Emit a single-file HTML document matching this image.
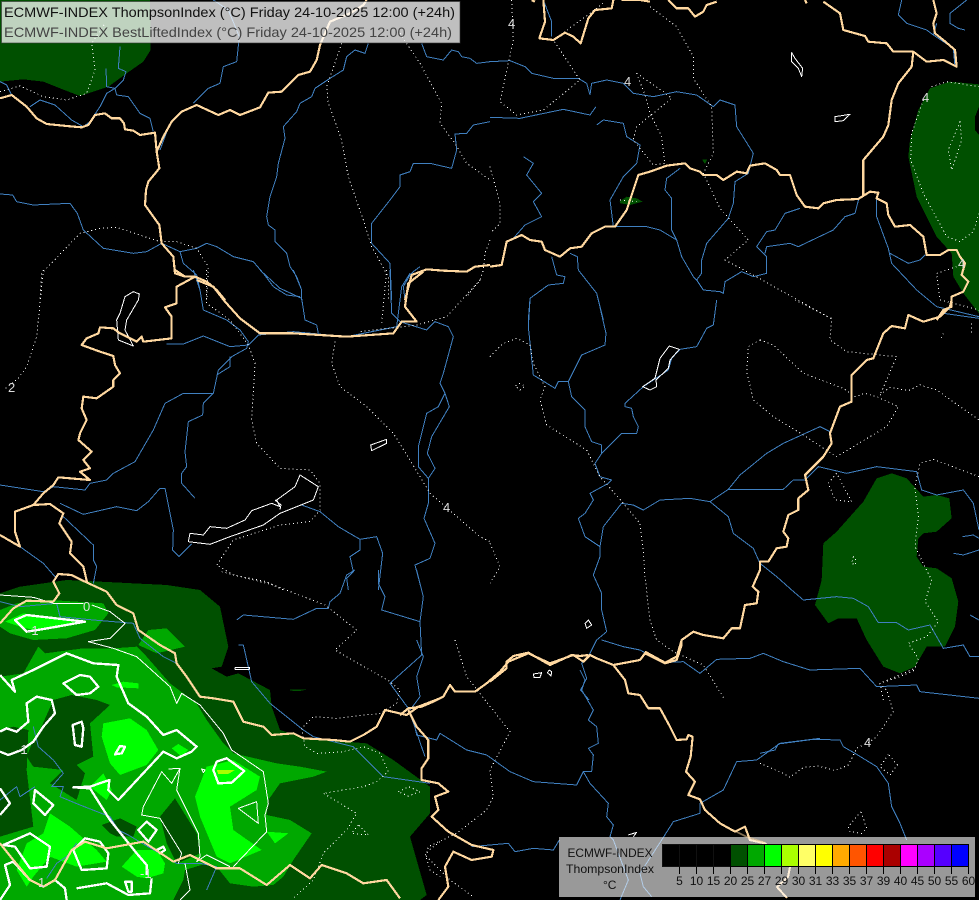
<!DOCTYPE html>
<html lang="en"><head><meta charset="utf-8"><title>ECMWF-INDEX ThompsonIndex</title>
<style>
html,body{margin:0;padding:0;background:#000;width:979px;height:900px;overflow:hidden}
svg{display:block;position:absolute;left:0;top:0}
polyline,polygon{stroke-linejoin:round}
.r *{fill:none;stroke:#4080c0;stroke-width:3}
.d *{fill:none;stroke:#fff;stroke-width:3;stroke-dasharray:3 9}
.w *{fill:none;stroke:#fff;stroke-width:3}
.t *{fill:none;stroke:#fff;stroke-width:7}
.b *{fill:none;stroke:#ffd8a0;stroke-width:6.5}
.k{fill:#005000}.m{fill:#00a800}.g{fill:#00ff00}.y{fill:#aaff00}
text{font-family:"Liberation Sans",sans-serif}
.lab{font-size:13px;fill:#ddd}
.tk{font-size:12px;fill:#111;text-anchor:middle}
</style></head><body>
<svg width="979" height="900" viewBox="0 0 979 900" xmlns="http://www.w3.org/2000/svg" shape-rendering="crispEdges">
<rect width="979" height="900" fill="#000"/>

<!-- FILLS -->
<g transform="scale(.33333)"><polygon class="k" points="0,0 450,0 452,150 430,185 380,220 325,260 240,288 180,265 130,245 70,238 0,245"/></g>
<g transform="translate(490 0) scale(.33333)">
<polygon class="k" points="1467,253 1380,245 1320,265 1285,330 1260,420 1255,470 1280,590 1340,710 1385,760 1390,830 1420,880 1467,940 1467,405 1455,390 1455,350 1467,320"/>
<polygon class="k" points="388,605 410,590 440,595 458,605 420,615 392,610"/>
<polygon class="k" points="636,478 652,478 645,492"/>
</g>
<g transform="translate(490 300) scale(.33333)">
<polygon class="k" points="1205,520 1160,535 1120,605 1040,695 1000,730 995,840 975,915 1015,970 1045,955 1100,955 1130,1020 1180,1100 1230,1120 1275,1100 1310,1040 1365,1040 1395,980 1405,905 1385,835 1340,805 1300,800 1280,770 1285,715 1300,700 1340,695 1385,655 1378,595 1340,585 1300,590 1250,535"/>
</g>
<g transform="translate(0 570) scale(.33333)">
<polygon class="k" points="0,70 60,50 200,30 500,45 600,60 660,110 685,230 665,290 635,295 680,320 715,310 810,360 815,410 840,480 915,505 1100,520 1180,570 1290,650 1290,730 1230,800 1280,975 1260,990 0,990"/>
<polygon class="k" points="870,358 925,358 900,363 870,362" style="fill:#005000"/>
<polygon class="m" points="0,120 50,100 150,90 310,100 325,130 285,180 200,205 100,210 30,190 0,170"/>
<polygon class="m" points="415,225 445,180 500,175 555,230 470,250"/>
<polygon class="m" points="0,320 70,310 115,230 135,250 250,235 340,235 410,230 440,260 510,340 590,400 620,450 670,520 700,550 830,580 900,590 980,605 940,620 840,640 805,690 800,735 870,750 935,790 880,870 850,920 820,945 760,950 690,940 650,890 620,880 555,900 550,930 520,990 0,990"/>
<polygon class="k" points="0,480 40,470 85,480 80,600 100,770 0,800"/>
<polygon class="k" points="120,480 160,390 215,375 290,390 330,405 270,460 280,560 230,585 255,610 230,690 150,640 190,600 100,590 80,560 100,510"/>
<polygon class="k" points="305,765 360,745 410,770 400,800 350,800 330,790"/>
<polygon class="k" points="480,740 525,685 590,790 600,850 555,870 530,880 500,820"/>
<polygon class="g" points="15,155 70,130 200,150 250,155 170,175 100,180 60,170"/>
<polygon class="g" points="310,460 390,445 440,480 475,540 440,585 360,615 330,580 305,500"/>
<polygon class="g" points="335,345 370,335 415,340 415,355 350,352"/>
<polygon class="g" points="515,535 535,522 565,540 545,560"/>
<polygon class="g" points="270,650 310,610 335,660 320,690"/>
<polygon class="g" points="585,680 620,590 700,570 780,620 770,660 690,710 700,780 785,840 690,880 650,860 600,740"/>
<polygon class="g" points="800,785 865,790 825,820"/>
<polygon class="g" points="80,820 130,790 150,730 210,770 290,840 320,875 230,890 150,860 100,920 80,950 50,900"/>
<polygon class="g" points="365,890 410,840 470,840 495,880 490,910 440,925 410,920"/>
<polygon class="y" points="650,600 705,600 685,612 655,612"/>
</g>

<!-- RIVERS -->
<g class="r" transform="scale(.33333)">
<polyline points="640,0 685,30 718,110 710,185 670,200 660,250 625,265 580,310"/>
<polyline points="1105,130 1095,160 1065,150 1040,170 1030,210 990,235 945,265 935,290 900,310 890,335 850,380 855,415 835,490 830,530 810,590 800,650 805,675 825,690 825,725 860,760 870,800 890,830 905,870 905,900"/>
<polyline points="1265,130 1280,170 1330,180 1355,150 1375,155 1385,170 1410,175 1430,190 1470,185"/>
<polyline points="360,140 355,205 378,215 370,240 345,265 320,280 300,320 270,365 250,380 215,360 165,315 120,300 90,320"/>
<polyline points="318,205 320,260 345,265 350,285 385,290 420,340 450,355 460,395"/>
<polyline points="0,245 20,255 35,285"/>
<polyline points="0,582 38,585 50,605 100,615 210,610 232,640 250,690 310,745 400,760 440,755 485,730 540,755 590,745 620,730 650,740 700,770 760,785 790,820 820,860 860,885 900,890"/>
<polyline points="510,370 480,450"/>
<polyline points="540,755 550,790 590,825 600,870"/>
<polyline points="1470,365 1420,375 1400,400 1365,402 1370,450 1355,505 1290,490 1240,490 1230,515 1200,525 1200,560 1170,600 1115,670 1115,730 1170,790 1175,900"/>
<polyline points="1260,800 1240,815 1230,825 1210,860 1215,900"/>
</g>
<g class="r" transform="translate(0 270) scale(.33333)">
<polyline points="580,0 600,60 610,120 680,150 720,180 745,215 740,235 695,260 655,300 640,370 610,400 608,435 565,455 555,545 560,590 545,610 545,640 585,685"/>
<polyline points="745,225 775,195 880,185 1040,200 1190,170 1205,50 1230,10"/>
<polyline points="1170,0 1175,130 1200,155"/>
<polyline points="780,0 840,55 905,85 915,150 950,165 955,190"/>
<polyline points="880,0 905,60"/>
<polyline points="690,260 690,290 650,315"/>
<polyline points="640,370 550,370 495,400 460,480 405,575 340,610 320,630 270,640 255,660 160,650 130,665 0,645"/>
<polyline points="500,222 550,222 610,198 690,230 745,225"/>
<polyline points="1200,155 1280,180 1305,155 1345,170 1360,200 1330,310 1320,340 1335,370 1348,410 1295,500 1282,550 1305,595 1285,625 1285,700 1272,745 1305,820 1290,865 1245,885 1265,960"/>
<polyline points="1335,370 1315,410 1280,430 1255,530 1255,590 1285,625"/>
<polyline points="180,700 250,733 350,710 410,722 445,695 480,655 495,655 520,780 518,840 537,860 575,822"/>
<polyline points="190,740 280,825 280,870 290,890 280,940"/>
<polyline points="60,830 130,880 165,920"/>
<polyline points="905,705 960,725 1015,770 1080,808 1130,800 1148,850 1135,960"/>
<polyline points="1080,808 1080,840 1050,860 1060,905 1040,925 1045,960"/>
</g>
<g class="r" transform="translate(490 0) scale(.33333)">
<polyline points="160,0 185,65 185,110"/>
<polyline points="0,185 60,182 105,200 125,220 190,235 265,235 290,250 300,285"/>
<polyline points="300,285 305,250 350,240 400,250 430,280 490,290 560,275 620,285 670,320 690,300 735,315 740,380 790,460 775,520 735,545 730,610 715,655 650,730 635,780 635,820 620,840 640,870 690,875 700,880 705,845 755,815 790,830 830,820 830,770 800,740 830,695 855,690 885,640 930,625"/>
<polyline points="825,760 830,740 900,730 925,740 1030,690 1065,650 1095,640 1108,590"/>
<polyline points="0,352 90,355 220,328 300,345 318,320"/>
<polyline points="320,375 340,360 400,370 410,410 450,435 440,490 400,530 360,600 370,680 470,680 510,690 560,720 575,770 610,830 620,840"/>
<polyline points="100,470 130,490 110,525 155,580 130,605 155,650 105,675 70,715"/>
<polyline points="185,770 200,825 225,830 220,850 175,855 120,895 115,960"/>
<polyline points="240,760 262,770 265,810 320,880 340,960"/>
<polyline points="570,505 530,535 525,570 545,595 545,690 560,720"/>
<polyline points="1160,590 1160,650 1195,745 1205,790 1280,870 1340,920 1467,950"/>
<polyline points="1200,760 1255,790 1290,780 1305,765"/>
<polyline points="1235,0 1225,45 1250,70 1310,90 1330,105 1340,70"/>
<polyline points="1330,105 1390,145 1395,200"/>
<polyline points="1430,0 1380,40 1380,70 1405,85 1425,90"/>
</g>
<g class="r" transform="translate(490 300) scale(.33333)">
<polyline points="120,0 115,80 130,225 195,265 205,245 235,245 275,165 345,135 348,100 325,0"/>
<polyline points="235,245 245,290 285,330 285,380 305,425 335,435 335,460 315,490 330,530 365,540 355,550 300,580 310,600 285,640 265,655 285,710 330,740 330,770 310,825 335,880 335,930 350,995 320,1020 300,1060 275,1090 290,1135 272,1170 297,1200"/>
<polyline points="335,460 365,430 395,400 440,400 445,380 430,350 425,325 405,320 405,310 460,260 535,210 545,175 570,148 620,140 650,85 670,75 680,0"/>
<polyline points="330,740 340,680 395,610 430,615 460,630 510,600 600,595 660,605 715,568 880,568 910,540 945,540 985,500 1070,520 1160,500 1280,515 1295,570 1340,585 1420,570 1450,610 1467,690"/>
<polyline points="660,605 715,650 730,700 790,745 810,790 860,830 905,870 940,900 1040,890 1090,895 1135,920 1165,968 1220,968 1255,990 1320,975 1360,1045 1420,1035 1440,1070 1467,1070"/>
<polyline points="715,568 750,525 830,460 880,430 990,380 1020,395"/>
<polyline points="335,1020 400,1040 450,1050 520,1088 580,1085 630,1120 680,1078 780,1075 820,1060 880,1085 960,1110 1110,1105 1160,1160 1280,1155 1290,1175 1467,1195"/>
<polyline points="1360,40 1467,55"/>
<polyline points="1417,710 1450,705 1467,715"/>
<polyline points="1390,760 1420,765 1467,750"/>
<polyline points="1440,945 1467,960"/>
</g>
<g class="r" transform="translate(760 640) scale(.33333)">
<polyline points="0,340 45,330 55,312 160,298 240,300 250,320 285,340 350,380 385,430 395,500 420,550 440,600"/>
</g>
<g class="r" transform="translate(400 640) scale(.33333)">
<polyline points="1260,295 1140,310 1070,360 1010,365 970,450 900,490 900,520 820,545 785,600 720,700 730,740 755,770"/>
<polyline points="50,0 70,50 50,110 60,170 30,210"/>
<polyline points="40,240 50,285 110,300 120,280 200,330 260,345 330,395 400,425 530,435 550,395 575,395 580,345 565,325 595,310 590,260 565,240 580,210 545,150 555,120 540,90"/>
<polyline points="550,395 570,430 625,490 620,530 640,555 630,590 640,600 685,720 660,780"/>
<polyline points="478,600 460,630 400,625 345,635 325,610 215,620"/>
</g>
<g class="r" transform="translate(0 570) scale(.33333)">
<polyline points="710,150 730,135 880,148 950,115 985,115 990,95 1020,70 1040,15 1065,0"/>
<polyline points="1135,0 1135,40 1155,80 1145,120 1260,155 1270,80 1250,0"/>
<polyline points="1260,155 1265,255 1170,340 1225,415 1275,560"/>
<polyline points="715,225 730,225 755,335 810,400 910,480 940,500 1060,530 1150,620 1290,640"/>
<polyline points="0,95 60,110 170,100 180,140 280,150 400,160 420,205 490,260 530,280"/>
<polyline points="100,470 115,530 160,570 190,610 155,650 190,650 180,680 240,705 330,740 355,780 385,795 410,810 530,880 600,880 650,890 620,960"/>
<polyline points="0,690 50,650 60,680 105,650"/>
<polyline points="140,925 170,880 200,860 230,820"/>
</g>

<!-- DOTTED -->
<g class="d" transform="scale(.33333)">
<polyline points="0,275 60,258 130,290 200,300 260,280 285,210 275,130 315,70"/>
<polyline points="1025,130 980,260 985,310 1025,420 1045,530 1090,660 1115,740 1165,830 1165,900"/>
<polyline points="1200,100 1260,190 1325,310 1320,370 1365,430 1400,490 1470,540"/>
<polyline points="1470,720 1455,760 1450,810 1440,840 1400,890"/>
<polyline points="120,895 125,820 240,700 300,685 350,682 480,725 530,725 590,745 625,800 620,900"/>
</g>
<g class="d" transform="translate(0 270) scale(.33333)">
<polyline points="130,0 110,200 80,290 55,325 10,360"/>
<polyline points="620,0 620,100 690,150 745,225 765,280 755,450 770,520 840,595 930,600 960,640 960,720 930,755 840,765 700,810 650,885 700,915 800,935 850,960"/>
<polyline points="1005,215 995,280 1020,350 1100,410 1180,490 1230,570 1290,670 1440,800 1470,815"/>
<polyline points="1440,30 1340,140 1250,165 1080,185"/>
<polyline points="1160,0 1145,160"/>
</g>
<g class="d" transform="translate(490 300) scale(.33333)">
<polyline points="0,730 30,800 0,850"/>
<polyline points="0,170 40,130 80,115 120,135 130,190 165,260 150,300 170,375 290,450 330,530 400,610 450,670 460,750 465,830 480,960 500,1020 550,1055 640,1095 705,1200"/>
<polyline points="915,0 1025,55 1020,120 1070,155 1220,170 1170,285"/>
<polygon points="810,120 775,140 770,215 790,300 850,350 940,405 1000,445 1040,470 1090,440 1190,380 1225,320 1160,290 1125,280 1095,290 1060,265 940,220 850,135"/>
<polyline points="1170,285 1200,262 1255,272 1290,255 1340,270 1467,360"/>
<polyline points="1467,530 1330,478 1290,490 1275,560 1285,650 1275,740 1325,840 1305,905 1345,965 1310,1010 1255,1030 1285,1075 1275,1105 1170,1150 1180,1200"/>
<polygon points="1040,520 1015,550 1035,600 1085,605"/>
<polygon points="90,250 75,258 90,270 105,258"/>
<polygon points="1090,770 1085,790 1097,795 1097,775"/>
<polyline points="1360,100 1350,120"/>
<polyline points="1445,70 1445,105"/>
</g>
<g class="d" transform="translate(760 640) scale(.33333)">
<polyline points="0,370 70,400 90,412 130,382 175,378 225,392 265,375 290,325 330,305 350,290 400,215 380,150 360,130 420,110 465,90"/>
<polygon points="385,343 360,380 390,405 412,375"/>
<polygon points="303,515 265,560 270,575 305,580 320,565"/>
</g>
<g class="d" transform="translate(400 640) scale(.33333)">
<polyline points="165,0 200,110 330,275 270,390 280,470 260,510 170,580 85,620 80,650 150,720 220,770"/>
</g>
<g class="d" transform="translate(490 0) scale(.33333)">
<polyline points="65,0 70,120 30,305 80,345 160,330 270,240 190,120 300,40 345,5"/>
<polyline points="480,20 560,80 610,170 610,235 665,320 670,460 640,520 690,625 775,720 705,780 790,825 1030,960"/>
<polygon points="440,220 520,275 545,295 440,380 430,420 490,495 525,490 515,410 480,340 465,285"/>
<polyline points="1325,260 1370,245 1467,260"/>
<polyline points="1300,300 1265,400 1262,480 1300,580 1370,710 1410,725 1450,695 1467,640"/>
<polygon points="1410,365 1415,420 1385,510 1375,450"/>
<polyline points="1400,800 1340,820 1350,900 1467,930"/>
<polyline points="390,600 440,605"/>
<polyline points="0,500 30,610 30,670 0,700"/>
</g>
<g class="d" transform="translate(0 570) scale(.33333)">
<polyline points="665,5 820,45 975,105 1070,180 1005,240 1170,335 1200,360 1190,400 1140,430 1010,445 940,440 905,475 915,530 950,550 1030,545 1090,530 1140,550 1165,605 1130,635 1090,650 970,670 1070,730 1040,780 970,850 940,930 880,985"/>
<polygon points="1195,665 1225,650 1260,665 1225,678"/>
<polygon points="1075,765 1055,790 1105,795"/>
<polyline points="1320,815 1275,850 1290,900 1320,920"/>
</g>

<!-- WHITE CONTOURS -->
<g class="w" transform="translate(490 0) scale(.33333)">
<polygon points="905,158 905,185 925,205 935,230 938,205 915,175"/>
<polygon points="1035,350 1080,343 1060,362 1035,365"/>
</g>
<g class="w" transform="translate(0 270) scale(.33333)">
<polygon points="400,65 375,80 360,130 350,150 355,210 400,228 375,180 380,150 415,90 418,72"/>
<polygon points="570,790 565,815 630,823 690,800 790,765 840,730 940,690 955,650 900,615 885,650 830,690 840,710 815,700 755,722 735,750 680,775 630,770 610,795"/>
<polyline points="825,690 843,705 840,718"/>
<polygon points="1112,525 1160,508 1160,520 1115,542"/>
</g>
<g class="w" transform="translate(490 300) scale(.33333)">
<polygon points="538,138 568,148 540,180 535,205 498,240 500,260 480,270 458,260 495,235 510,175"/>
<polygon points="295,960 285,970 290,985 305,975"/>
<polygon points="130,1122 155,1118 150,1132 132,1132"/>
<polyline points="178,1110 172,1118 183,1128 185,1115 178,1110"/>
</g>
<g class="w" transform="translate(400 640) scale(.33333)">
<polyline points="685,585 710,577 700,590"/>
</g>
<g class="w" transform="translate(0 570) scale(.33333)">
<polyline points="0,75 100,82 160,100 250,100"/>
<polyline points="275,105 330,125 375,160 330,205 265,215 340,235 410,260 510,350 530,400 545,370 600,405 670,490 695,540 790,605 805,700 795,735 800,785 700,890"/>
<polyline points="505,597 540,595 515,640 485,605 430,710 425,735 480,745 545,850 535,880"/>
<polyline points="540,595 530,660 595,790 600,860 590,875 620,855 690,890"/>
<polygon points="715,715 770,695 775,760"/>
<polyline points="555,880 570,960 540,990"/>
<polygon points="605,597 615,600 610,608"/>
<polyline points="705,292 748,292 748,298 705,298 705,292"/>
</g>
<g class="t" transform="translate(0 570) scale(.33333)">
<polygon points="45,150 80,135 255,155 125,178 80,185"/>
<polyline points="0,315 45,365 35,330 100,300 200,250 280,280 355,285 350,320 385,400 440,440 490,495 530,480 590,530 575,545 530,565 490,545 355,690 325,660 328,630 270,650 220,652 270,655 330,750 410,850 440,885 440,915"/>
<polygon points="190,340 240,315 270,320 295,350 270,370 230,375"/>
<polyline points="0,545 25,555 65,540 100,515 130,470 165,430 155,390 110,380 80,400 85,455 50,485 20,475 0,485"/>
<polygon points="218,465 245,455 250,475 245,530 225,525"/>
<polygon points="345,553 360,528 375,530 365,550"/>
<polygon points="650,575 680,565 733,603 695,638 655,640 640,600"/>
<polygon points="105,660 160,705 135,735 100,700"/>
<polyline points="0,655 30,700 0,735"/>
<polygon points="440,755 470,780 445,815 415,780"/>
<polygon points="10,825 90,790 150,830 140,890 90,895 45,830"/>
<polygon points="255,805 300,815 325,850 320,895 245,900 220,840"/>
<polyline points="200,990 195,955 165,930 130,950 90,930 40,875 15,885 30,945 0,990"/>
<polyline points="230,955 320,940 385,975 450,970 455,925"/>
<polygon points="375,935 395,935 395,965 385,965"/>
<polygon points="470,840 490,830 495,840 480,850"/>
</g>

<!-- BORDERS -->
<g class="b" transform="scale(.33333)">
<polyline points="0,295 35,285 80,320 110,355 140,372 200,378 245,382 265,375 285,345 315,340 335,355 360,355 372,370 375,388 400,392 420,405 465,398 470,455 478,505 445,545 438,570 435,615 460,650 478,675 485,730 520,770 525,820 555,830 585,830 620,845 650,870 675,900"/>
<polyline points="470,455 490,410 515,365 545,335 590,315 655,345 690,330 720,345 780,322 805,278 845,275 895,225 930,215 950,180 960,135 990,65 1050,40 1090,15 1100,0"/>
<polyline points="1215,900 1235,825 1280,808 1330,812 1400,815 1425,800 1470,795"/>
</g>
<g class="b" transform="translate(0 270) scale(.33333)">
<polyline points="525,0 555,20 585,20 530,50 530,100 495,112 515,140 515,205 430,215 425,200 410,215 360,190 340,175 300,172 295,190 260,205 245,225 300,245 340,258 345,285 360,310 340,330 340,350 290,385 250,380 245,415 260,450 240,490 235,510 275,545 250,570 270,595 240,605 270,630 175,622 160,645 130,670 100,705 45,725 45,785 60,830 0,795"/>
<polyline points="100,705 150,702 190,730 178,760 215,815 210,850 250,890 262,940"/>
<polyline points="590,30 640,50 675,95 720,145 780,190 880,190 1040,200 1180,190 1205,155 1250,155 1215,110 1225,40 1270,5"/>
</g>
<g class="b" transform="translate(490 0) scale(.33333)">
<polyline points="0,800 35,795 50,725 95,705 120,720 155,725 165,750 210,770 240,745 275,740 305,700 345,680 375,680 410,630 445,525 480,515 530,497 585,490 600,505 630,515 640,525 680,525 700,540 740,515 770,520 780,497 825,490 860,510 870,525 900,525 920,585 945,620 985,625 1000,610 1040,600 1105,597 1140,575 1165,578 1160,595 1190,610 1195,645 1215,680 1260,675 1300,710 1310,765 1350,765 1375,750 1400,750 1410,770 1425,790 1415,825 1435,845 1420,875 1385,890 1385,920 1360,930 1340,960"/>
<polyline points="1120,590 1120,480 1180,410 1195,375 1205,300 1225,250 1265,200 1270,155"/>
<polyline points="1270,155 1210,155 1190,130 1135,125 1125,108 1060,90 1050,40 1000,5"/>
<polyline points="1270,155 1310,185 1360,180 1400,200 1395,150 1360,120 1335,100 1330,70 1340,40 1330,0"/>
<polyline points="160,0 165,65 148,115 190,120 225,98 250,110 272,130 295,55 315,30 365,25 370,0"/>
<polyline points="535,0 560,25 595,25 615,50 640,35 650,15 680,5"/>
<polyline points="945,0 950,10"/>
<polyline points="395,0 450,0 480,5"/>
<polyline points="125,0 135,5"/>
</g>
<g class="b" transform="translate(0 570) scale(.33333)">
<polyline points="255,35 215,15 175,12 160,35 178,70 160,95 80,92 40,115 0,160"/>
<polyline points="255,35 320,65 350,105 400,130 415,180 480,225 525,250 530,280 560,320 600,380 640,385 700,395 730,455 790,470 815,495 880,490 910,505 1000,510 1050,515 1090,495 1130,470 1155,420 1220,435 1255,410 1320,385"/>
<polyline points="0,820 40,870 90,930 130,950 165,930 215,840 255,815 320,835 430,815 520,875 570,855 650,895 720,895 800,945 870,885 930,925 965,885 1040,910 1090,940 1160,930 1200,985"/>
</g>
<g class="b" transform="translate(400 640) scale(.33333)">
<polyline points="0,225 25,205 65,200 100,185 130,170 150,135 165,155 225,155 260,130 300,95 325,65 385,40 450,70 520,45 550,65 570,45 590,55 640,75 720,60 735,40 795,70 830,60 845,15 845,0"/>
<polyline points="25,210 50,260 85,300 85,355 65,385 65,420 115,430 145,455 105,470 115,510 95,530 145,575 215,615 280,630 275,650 215,660 160,635 135,680 145,740 115,780"/>
<polyline points="640,75 675,120 685,160 720,165 745,205 780,205 810,260 830,300 860,298 865,285 878,290 872,350 858,395 885,425 865,465 900,478 915,510 960,550 1005,575 1035,560 1050,600 1095,610"/>
</g>
<g class="b" transform="translate(490 300) scale(.33333)">
<polyline points="0,1145 50,1105 50,1085 70,1068 115,1058 180,1095 245,1065 270,1068 295,1065"/>
<polyline points="465,1055 525,1088 560,1070 575,1020 610,995 640,1005 700,1015 725,985 750,985 765,915 800,910 805,875 788,860 810,810 810,785 835,785 860,745 890,740 895,715 880,695 895,645 925,630 925,595 955,570 945,525 1000,470 1025,430 1020,400 1050,320 1085,305 1085,225 1130,180 1150,175 1180,100 1205,78 1245,85 1255,45 1300,65 1350,50 1380,20 1385,0"/>
</g>
<polyline fill="none" stroke="#ffd8a0" stroke-width="2" points="765,843 790,867 788,877 777,887 787,898"/>

<!-- CONTOUR LABELS -->
<g class="lab">
<text x="83" y="611">0</text><text x="27" y="635">-1</text><text x="16" y="754">-1</text>
<text x="38" y="887">1</text><text x="140" y="878">-1</text><text x="8" y="392">2</text>
<text x="443" y="512">4</text><text x="508" y="28">4</text><text x="624" y="86">4</text>
<text x="922" y="102">4</text><text x="958" y="268">4</text><text x="864" y="747">4</text>
</g>

<!-- TOP LEGEND -->
<rect x="1.5" y="1.5" width="458.5" height="41.5" fill="#fff" fill-opacity=".75" stroke="#333" stroke-opacity=".6"/>
<text x="4" y="17" font-size="14" fill="#111" textLength="451" lengthAdjust="spacingAndGlyphs">ECMWF-INDEX ThompsonIndex (°C) Friday 24-10-2025 12:00 (+24h)</text>
<text x="4" y="37" font-size="14" fill="#444" textLength="448" lengthAdjust="spacingAndGlyphs">ECMWF-INDEX BestLiftedIndex (°C) Friday 24-10-2025 12:00 (+24h)</text>

<!-- BOTTOM LEGEND -->
<rect x="559" y="837" width="416" height="60" fill="#fff" fill-opacity=".6"/>
<polyline fill="none" stroke="#ffd8a0" stroke-width="2" stroke-opacity=".5" points="733,830 747,837 765,843"/>
<text x="567.5" y="857" font-size="12" fill="#111" textLength="85" lengthAdjust="spacingAndGlyphs">ECMWF-INDEX</text>
<text x="566" y="873" font-size="12" fill="#111" textLength="88" lengthAdjust="spacingAndGlyphs">ThompsonIndex</text>
<text x="603" y="889" font-size="12" fill="#111">°C</text>
<g stroke="#000" stroke-width="1">
<rect x="662.5" y="844.5" width="17" height="22" fill="#000" stroke="#111"/>
<rect x="679.5" y="844.5" width="17" height="22" fill="#000" stroke="#111"/>
<rect x="696.5" y="844.5" width="17" height="22" fill="#000" stroke="#111"/>
<rect x="713.5" y="844.5" width="17" height="22" fill="#000" stroke="#111"/>
<rect x="730.5" y="844.5" width="17" height="22" fill="#005000"/>
<rect x="747.5" y="844.5" width="17" height="22" fill="#00a800"/>
<rect x="764.5" y="844.5" width="17" height="22" fill="#00ff00"/>
<rect x="781.5" y="844.5" width="17" height="22" fill="#aaff00"/>
<rect x="798.5" y="844.5" width="17" height="22" fill="#ffff66"/>
<rect x="815.5" y="844.5" width="17" height="22" fill="#ffff00"/>
<rect x="832.5" y="844.5" width="17" height="22" fill="#ffaa00"/>
<rect x="849.5" y="844.5" width="17" height="22" fill="#ff5500"/>
<rect x="866.5" y="844.5" width="17" height="22" fill="#ff0000"/>
<rect x="883.5" y="844.5" width="17" height="22" fill="#aa0000"/>
<rect x="900.5" y="844.5" width="17" height="22" fill="#ff00ff"/>
<rect x="917.5" y="844.5" width="17" height="22" fill="#aa00ff"/>
<rect x="934.5" y="844.5" width="17" height="22" fill="#5500ff"/>
<rect x="951.5" y="844.5" width="17" height="22" fill="#0000ff"/>
<path d="M679.5 867v7M696.5 867v7M713.5 867v7M730.5 867v7M747.5 867v7M764.5 867v7M781.5 867v7M798.5 867v7M815.5 867v7M832.5 867v7M849.5 867v7M866.5 867v7M883.5 867v7M900.5 867v7M917.5 867v7M934.5 867v7M951.5 867v7M968.5 867v7"/>
</g>
<g class="tk">
<text x="679.5" y="885">5</text><text x="696.5" y="885">10</text><text x="713.5" y="885">15</text><text x="730.5" y="885">20</text><text x="747.5" y="885">25</text><text x="764.5" y="885">27</text><text x="781.5" y="885">29</text><text x="798.5" y="885">30</text><text x="815.5" y="885">31</text><text x="832.5" y="885">33</text><text x="849.5" y="885">35</text><text x="866.5" y="885">37</text><text x="883.5" y="885">39</text><text x="900.5" y="885">40</text><text x="917.5" y="885">45</text><text x="934.5" y="885">50</text><text x="951.5" y="885">55</text><text x="968.5" y="885">60</text>
</g>
</svg>
</body></html>
